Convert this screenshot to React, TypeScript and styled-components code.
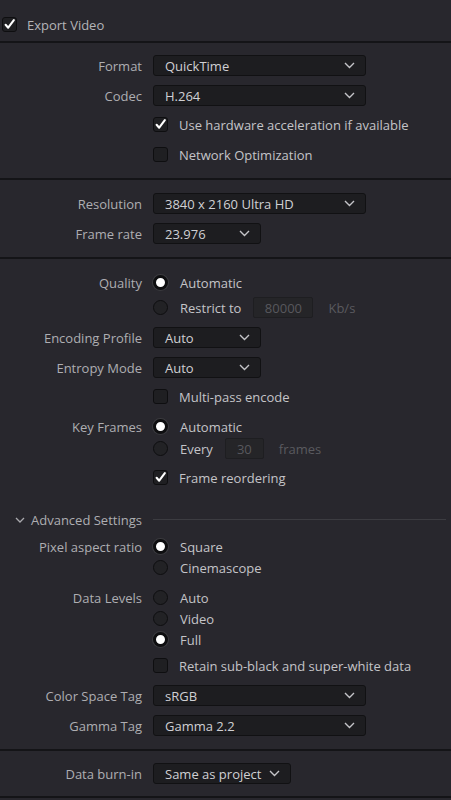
import React from "react";
import styled, { createGlobalStyle } from "styled-components";

const GlobalStyle = createGlobalStyle`
  html, body {
    margin: 0;
    padding: 0;
    background: #28272d;
  }
  body {
    font-family: "Open Sans", "Liberation Sans", sans-serif;
    font-size: 13px;
    -webkit-font-smoothing: antialiased;
  }
`;

const Chevron = () => (
  <svg width="11" height="7" viewBox="0 0 11 7">
    <polyline points="1,1 5.5,5.5 10,1" fill="none" stroke="#c4c4c8" strokeWidth="1.4" />
  </svg>
);

const Tick = () => (
  <svg width="15" height="15" viewBox="0 0 15 15">
    <path d="M3 7.8 L6 11.2 L12.5 2.5" fill="none" stroke="#fff" strokeWidth="2.4" strokeLinecap="round" strokeLinejoin="round" />
  </svg>
);

const Dropdown = ({ value, w }: { value: string; w: number }) => (
  <Select $w={w}>
    <span>{value}</span>
    <Chevron />
  </Select>
);

const Check = ({ on, label }: { on?: boolean; label: string }) => (
  <Controls>
    <Box>{on && <Tick />}</Box>
    <CheckText>{label}</CheckText>
  </Controls>
);

const Option = ({ on, label, children }: { on?: boolean; label: string; children?: React.ReactNode }) => (
  <Controls>
    <Radio $on={on} />
    <RadioText>{label}</RadioText>
    {children}
  </Controls>
);

const App = () => {
  return (
    <>
      <GlobalStyle />
      <Panel>
        <Header>
          <Box>
            <Tick />
          </Box>
          <HeaderTitle>Export Video</HeaderTitle>
        </Header>

        <Section $pt={12} $pb={13}>
          <Row>
            <Label>Format</Label>
            <Dropdown value="QuickTime" w={213} />
          </Row>
          <Row $mt={9}>
            <Label>Codec</Label>
            <Dropdown value="H.264" w={213} />
          </Row>
          <Row $mt={8}>
            <Label />
            <Check on label="Use hardware acceleration if available" />
          </Row>
          <Row $mt={9}>
            <Label />
            <Check label="Network Optimization" />
          </Row>
        </Section>

        <Section $pt={13} $pb={13}>
          <Row>
            <Label>Resolution</Label>
            <Dropdown value="3840 x 2160 Ultra HD" w={213} />
          </Row>
          <Row $mt={9}>
            <Label>Frame rate</Label>
            <Dropdown value="23.976" w={108} />
          </Row>
        </Section>

        <Section $pt={13} $pb={13}>
          <Row>
            <Label>Quality</Label>
            <Option on label="Automatic" />
          </Row>
          <Row $mt={4}>
            <Label />
            <Option label="Restrict to">
              <Field $w={60} $ml={12}>80000</Field>
              <Unit>Kb/s</Unit>
            </Option>
          </Row>
          <Row $mt={9}>
            <Label>Encoding Profile</Label>
            <Dropdown value="Auto" w={108} />
          </Row>
          <Row $mt={9}>
            <Label>Entropy Mode</Label>
            <Dropdown value="Auto" w={108} />
          </Row>
          <Row $mt={8}>
            <Label />
            <Check label="Multi-pass encode" />
          </Row>
          <Row $mt={9}>
            <Label>Key Frames</Label>
            <Option on label="Automatic" />
          </Row>
          <Row $mt={1}>
            <Label />
            <Option label="Every">
              <Field $w={39} $ml={12}>30</Field>
              <Unit>frames</Unit>
            </Option>
          </Row>
          <Row $mt={8}>
            <Label />
            <Check on label="Frame reordering" />
          </Row>

          <Advanced>
            <svg width="10" height="6" viewBox="0 0 10 6">
              <polyline points="1,1 5,5 9,1" fill="none" stroke="#a9a9ad" strokeWidth="1.3" />
            </svg>
            <AdvancedTitle>Advanced Settings</AdvancedTitle>
            <Rule />
          </Advanced>

          <Row $mt={6}>
            <Label>Pixel aspect ratio</Label>
            <Option on label="Square" />
          </Row>
          <Row>
            <Label />
            <Option label="Cinemascope" />
          </Row>
          <Row $mt={9}>
            <Label>Data Levels</Label>
            <Option label="Auto" />
          </Row>
          <Row>
            <Label />
            <Option label="Video" />
          </Row>
          <Row>
            <Label />
            <Option on label="Full" />
          </Row>
          <Row $mt={5}>
            <Label />
            <Check label="Retain sub-black and super-white data" />
          </Row>
          <Row $mt={9}>
            <Label>Color Space Tag</Label>
            <Dropdown value="sRGB" w={213} />
          </Row>
          <Row $mt={9}>
            <Label>Gamma Tag</Label>
            <Dropdown value="Gamma 2.2" w={213} />
          </Row>
        </Section>

        <Section $pt={12} $pb={12}>
          <Row>
            <Label>Data burn-in</Label>
            <Dropdown value="Same as project" w={138} />
          </Row>
        </Section>
      </Panel>
    </>
  );
};

export default App;

const Panel = styled.div`
  width: 451px;
  min-height: 800px;
  background: #28272d;
`;

const Header = styled.div`
  box-sizing: border-box;
  height: 43px;
  display: flex;
  align-items: center;
  padding: 14px 0 6px 2px;
  border-bottom: 2px solid #141417;
`;

const HeaderTitle = styled.span`
  margin-left: 10px;
  color: #b4b4b8;
  font-size: 13px;
`;

const Section = styled.div<{ $pt: number; $pb: number }>`
  padding-top: ${({ $pt }) => $pt}px;
  padding-bottom: ${({ $pb }) => $pb}px;
  border-bottom: 2px solid #141417;
`;

const Row = styled.div<{ $mt?: number }>`
  display: grid;
  grid-template-columns: 142px 1fr;
  column-gap: 11px;
  align-items: center;
  height: 21px;
  margin-top: ${({ $mt = 0 }) => $mt}px;
`;

const Label = styled.span`
  text-align: right;
  color: #aeaeb2;
  white-space: nowrap;
`;

const Controls = styled.div`
  display: flex;
  align-items: center;
  white-space: nowrap;
`;

const Select = styled.div<{ $w: number }>`
  box-sizing: border-box;
  width: ${({ $w }) => $w}px;
  height: 21px;
  display: flex;
  align-items: center;
  justify-content: space-between;
  padding: 0 10px 0 11px;
  background: #1d1d20;
  border: 1px solid #111113;
  border-radius: 3px;
  color: #d0d0d4;
`;

const Box = styled.div`
  box-sizing: border-box;
  width: 15px;
  height: 15px;
  flex: none;
  display: flex;
  align-items: center;
  justify-content: center;
  background: #1f1f22;
  border: 1px solid #0e0e10;
  border-radius: 3px;
  overflow: visible;
`;

const CheckText = styled.span`
  margin-left: 11px;
  color: #c4c4c8;
`;

const Radio = styled.div<{ $on?: boolean }>`
  box-sizing: border-box;
  width: 15px;
  height: 15px;
  flex: none;
  border-radius: 50%;
  background: ${({ $on }) => ($on ? "#ffffff" : "#222225")};
  border: ${({ $on }) => ($on ? "3px solid #0e0e10" : "1.5px solid #0e0e10")};
  box-shadow: ${({ $on }) => ($on ? "0 0 0 1px #3a3a3e" : "none")};
`;

const RadioText = styled.span`
  margin-left: 12px;
  color: #c4c4c8;
`;

const Field = styled.div<{ $w: number; $ml: number }>`
  box-sizing: border-box;
  width: ${({ $w }) => $w}px;
  height: 21px;
  margin-left: ${({ $ml }) => $ml}px;
  display: flex;
  align-items: center;
  justify-content: center;
  background: #252528;
  border: 1px solid #1e1e21;
  border-radius: 2px;
  color: #58585d;
`;

const Unit = styled.span`
  margin-left: 15px;
  color: #5a5a5f;
`;

const Advanced = styled.div`
  display: flex;
  align-items: center;
  height: 21px;
  margin-top: 21px;
  padding-left: 15px;
  padding-right: 5px;
`;

const AdvancedTitle = styled.span`
  margin-left: 6px;
  color: #aeaeb2;
`;

const Rule = styled.div`
  flex: 1;
  height: 1px;
  margin-left: 11px;
  background: #3c3c41;
`;
